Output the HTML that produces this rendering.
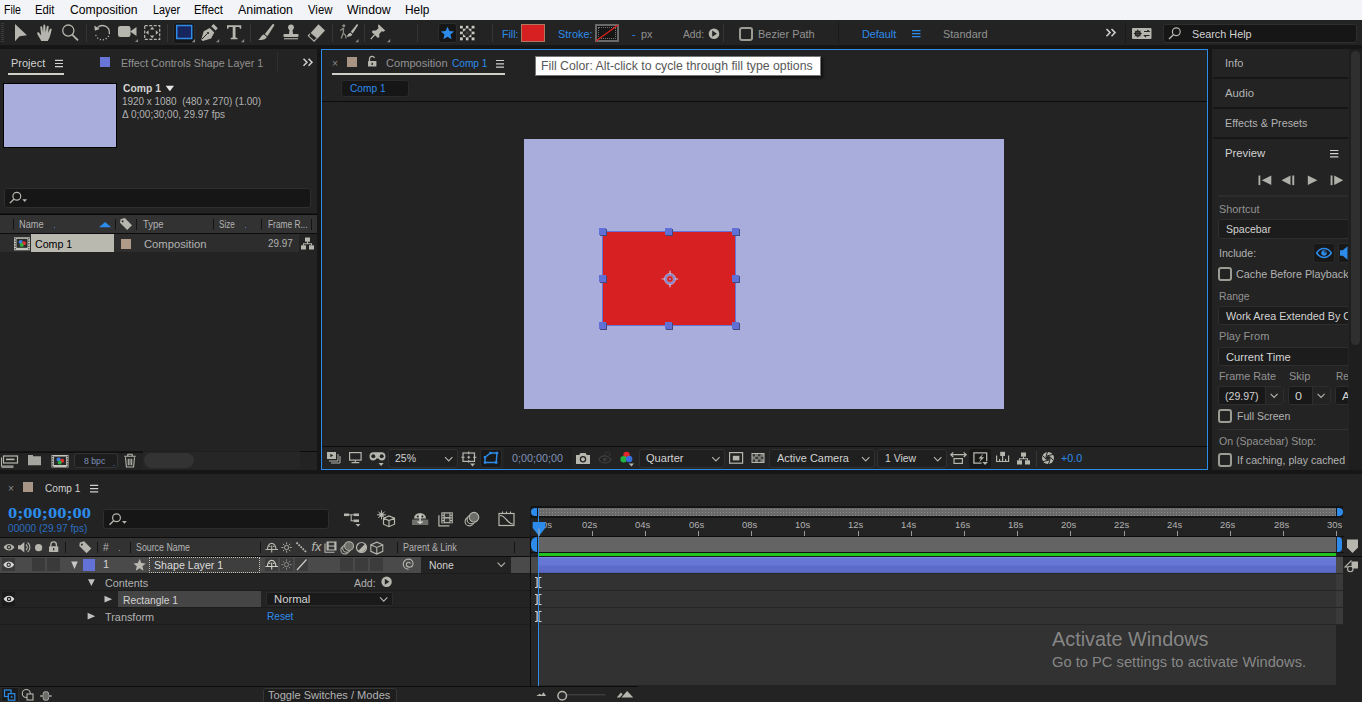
<!DOCTYPE html>
<html lang="en"><head><meta charset="utf-8"><title>After Effects - Comp 1</title>
<style>
html,body{margin:0;padding:0;}
body{width:1362px;height:702px;overflow:hidden;background:#161616;font-family:"Liberation Sans", sans-serif;position:relative;}
.b{position:absolute;box-sizing:border-box;}
.i{position:absolute;overflow:visible;}
.t{position:absolute;white-space:pre;transform-origin:0 50%;}
</style></head>
<body>
<nav aria-label="Menu bar">
<div class="b" style="left:0px;top:0px;width:1362px;height:20px;background:#f3f4f8;"></div>
<span class="t" style="left:4px;top:3px;font-size:12.5px;line-height:14px;color:#000;transform:scaleX(0.8434);">File</span>
<span class="t" style="left:35.3px;top:3px;font-size:12.5px;line-height:14px;color:#000;transform:scaleX(0.9004);">Edit</span>
<span class="t" style="left:69.7px;top:3px;font-size:12.5px;line-height:14px;color:#000;transform:scaleX(0.9729);">Composition</span>
<span class="t" style="left:152.7px;top:3px;font-size:12.5px;line-height:14px;color:#000;transform:scaleX(0.8631);">Layer</span>
<span class="t" style="left:194.3px;top:3px;font-size:12.5px;line-height:14px;color:#000;transform:scaleX(0.9138);">Effect</span>
<span class="t" style="left:238.3px;top:3px;font-size:12.5px;line-height:14px;color:#000;transform:scaleX(0.9893);">Animation</span>
<span class="t" style="left:308.3px;top:3px;font-size:12.5px;line-height:14px;color:#000;transform:scaleX(0.9079);">View</span>
<span class="t" style="left:347.3px;top:3px;font-size:12.5px;line-height:14px;color:#000;transform:scaleX(0.9827);">Window</span>
<span class="t" style="left:405.3px;top:3px;font-size:12.5px;line-height:14px;color:#000;transform:scaleX(0.9487);">Help</span>
</nav>
<header aria-label="Tools">
<div class="b" style="left:0px;top:20px;width:1362px;height:25px;background:#232323;"></div>
<div class="b" style="left:1px;top:23px;width:3px;height:19px;background:repeating-linear-gradient(to bottom,#3c3c3c 0 1px,transparent 1px 2px);"></div>
<div class="b" style="left:86px;top:24px;width:1px;height:18px;background:#353535;"></div>
<div class="b" style="left:167px;top:24px;width:1px;height:18px;background:#353535;"></div>
<div class="b" style="left:250px;top:24px;width:1px;height:18px;background:#353535;"></div>
<div class="b" style="left:332px;top:24px;width:1px;height:18px;background:#353535;"></div>
<div class="b" style="left:364px;top:24px;width:1px;height:18px;background:#353535;"></div>
<div class="b" style="left:417px;top:24px;width:1px;height:18px;background:#353535;"></div>
<div class="b" style="left:492px;top:24px;width:1px;height:18px;background:#353535;"></div>
<div class="b" style="left:723px;top:24px;width:1px;height:18px;background:#353535;"></div>
<div class="b" style="left:838px;top:22px;width:1px;height:22px;background:#1a1a1a;"></div>
<div class="b" style="left:1125px;top:22px;width:1px;height:22px;background:#1a1a1a;"></div>
<div class="b" style="left:173px;top:22px;width:22px;height:22px;background:#161616;border-radius:3px;border:1px solid #2c2c2c;"></div>
<div class="b" style="left:438px;top:23px;width:19px;height:20px;background:#161616;border-radius:3px;border:1px solid #2c2c2c;"></div>
<span class="t" style="left:501.5px;top:28px;font-size:11px;line-height:12px;color:#2d8ceb;transform:scaleX(0.9644);">Fill:</span>
<div class="b" style="left:521px;top:24px;width:24px;height:18px;background:#d62022;border:1px solid #b07860;"></div>
<span class="t" style="left:557.5px;top:28px;font-size:11px;line-height:12px;color:#2d8ceb;transform:scaleX(0.9897);">Stroke:</span>
<div class="b" style="left:595px;top:24px;width:24px;height:18px;background:#161616;border:2px solid #6a6a68;outline:1px dotted #747472;outline-offset:-4px;"></div>
<svg class="i" style="left:595px;top:24px;" width="24" height="18" viewBox="0 0 24 18"><line x1="1" y1="17" x2="23" y2="1" stroke="#e0201c" stroke-width="1.2"/></svg>
<span class="t" style="left:632px;top:28px;font-size:11px;line-height:12px;color:#2d8ceb;transform:scaleX(0.9532);">-</span>
<span class="t" style="left:641px;top:28px;font-size:11px;line-height:12px;color:#929292;transform:scaleX(0.9892);">px</span>
<span class="t" style="left:682.5px;top:28px;font-size:11px;line-height:12px;color:#929292;transform:scaleX(0.9364);">Add:</span>
<div class="b" style="left:739px;top:27px;width:14px;height:14px;border:2px solid #9c9c94;border-radius:3px;"></div>
<span class="t" style="left:757.5px;top:28px;font-size:11px;line-height:12px;color:#929292;transform:scaleX(0.9969);">Bezier Path</span>
<span class="t" style="left:862px;top:28px;font-size:11px;line-height:12px;color:#2d8ceb;transform:scaleX(0.9811);">Default</span>
<span class="t" style="left:943px;top:28px;font-size:11px;line-height:12px;color:#929292;transform:scaleX(0.9965);">Standard</span>
<div class="b" style="left:1163px;top:24px;width:194px;height:19px;background:#161616;border:1px solid #2e2e2e;border-radius:3px;"></div>
<span class="t" style="left:1191.8px;top:28px;font-size:11px;line-height:12px;color:#d2d2d2;transform:scaleX(0.9844);">Search Help</span>
<svg class="i" style="left:0;top:20px" width="1362" height="25" viewBox="0 20 1362 25"><path d="M15 24L27 35.3L19.6 36.2L15 41.2Z" fill="#b6b6ae"/><path d="M41.2 41c-1.2-2.6-3-4.6-4-7.2c-.4-1.2 1-2 1.9-1l2.1 2.6l-.9-8.2c0-1.3 1.7-1.4 1.9-.1l.9 5.4l.2-7c.1-1.3 1.9-1.3 2 0l.3 7l1.2-6c.3-1.2 1.9-1 1.9.3l-.7 6.3l1.9-4c.5-1.1 2-.6 1.7.6c-.6 3.4-1.6 7.500-3.800 11.300z" fill="#b6b6ae"/><circle cx="68.3" cy="30.6" r="5.6" fill="none" stroke="#b6b6ae" stroke-width="1.3"/><path d="M72.4 34.8L78 40.4" stroke="#b6b6ae" stroke-width="1.8"/><path d="M97.5 27.6A7 7 0 0 1 109.4 33" fill="none" stroke="#b6b6ae" stroke-width="1.3"/><path d="M109.4 33A7 7 0 0 1 95.5 34" fill="none" stroke="#b6b6ae" stroke-width="1.3" stroke-dasharray="1.2 1.8"/><path d="M94.3 25.4l.6 5.3l4.8-1.7z" fill="#b6b6ae"/><rect x="118" y="26" width="12.5" height="11" rx="2.2" fill="#b6b6ae"/><path d="M130 31.5l6.5-4.500v9z" fill="#b6b6ae"/><path d="M138 39v3h-3z" fill="#8a8a84"/><rect x="144.700" y="25.700" width="15" height="13.600" fill="none" stroke="#b6b6ae" stroke-width="1.2" stroke-dasharray="3 1.500"/><path d="M152.200 26.800l2.200 2.600h-4.400zM152.200 38.200l2.200-2.600h-4.400zM145.900 32.500l2.700-2.200v4.400zM158.500 32.500l-2.700-2.200v4.400z" fill="#b6b6ae"/><rect x="176.700" y="25.500" width="15" height="13" fill="#17275e" stroke="#2d8ceb" stroke-width="1.5"/><path d="M195 39v3.200h-3.200z" fill="#8a8a84"/><path d="M201.300 39.600l2.400-8.400l6-3.200l4.600 4.600l-3.200 6l-8.400 2.400zM211.200 26.200l2.400-2.200l4.200 4.200l-2.200 2.400z" fill="#b6b6ae"/><path d="M202 39l5.200-5.200" stroke="#232323" stroke-width="1"/><circle cx="208" cy="33" r="1.100" fill="#232323"/><path d="M219.200 39v3.200h-3.200z" fill="#8a8a84"/><path d="M227 25.200h14.200v3.600h-1.300l-.5-1.800h-3.900v10.600l2 .4v1.200h-6.800v-1.200l2-.4v-10.600h-3.900l-.5 1.800h-1.300z" fill="#b6b6ae"/><path d="M244.200 39v3.200h-3.200z" fill="#8a8a84"/><path d="M272.500 24.200c1.200-.6 2.200.4 1.600 1.500l-6.700 10.500l-2.600-2.300z" fill="#b6b6ae"/><path d="M264 34.600l2.800 2.500c-.8 2.300-4.700 3.500-8.600 2.700c2.400-.8 2.600-4.600 5.800-5.200z" fill="#b6b6ae"/><circle cx="291" cy="27.300" r="2.900" fill="#b6b6ae"/><path d="M289.600 29h2.800l.6 5h-4z" fill="#b6b6ae"/><rect x="283.500" y="34" width="15" height="3" rx=".8" fill="#b6b6ae"/><rect x="284" y="38.200" width="14" height="1.100" fill="#b6b6ae"/><path d="M318.500 24.300l6.500 6.100l-7.600 8.400l-6.800-5.900z" fill="#b6b6ae"/><path d="M310 33.800l-1.700 2l5.800 5.400l2.600-2.800" fill="none" stroke="#b6b6ae" stroke-width="1.100"/><circle cx="343.800" cy="25.800" r="1.500" fill="#8a8a84"/><path d="M343.600 28l-3.400 2.600M343.600 28l-.4 5l-2 5.400M343.200 33l2.400 2.500l.4 3" stroke="#8a8a84" stroke-width="1.300" fill="none"/><path d="M356.800 24.300c.9-.4 1.500.3 1.100 1.100l-5.200 8.100l-1.900-1.700z" fill="#b6b6ae"/><path d="M350.300 32.700l2 1.800c-.6 1.700-3.400 2.500-6.200 2c1.700-.6 1.900-3.400 4.200-3.800z" fill="#b6b6ae"/><path d="M358.500 39v3.200h-3.200z" fill="#8a8a84"/><path d="M378.600 24.200l6.600 6.300l-1.800 1.300l-1.700-.6l-2.500 2.700l.2 3l-1.500 1.200l-6.200-6.200l1.300-1.500l3 .2l2.600-2.600l-.7-1.700z" fill="#b6b6ae"/><path d="M374.600 34.800l-3.800 4.300" stroke="#b6b6ae" stroke-width="1.300"/><path d="M390.200 39v3.200h-3.200z" fill="#8a8a84"/><path d="M447.500 26.800l1.900 4.300l4.700.4l-3.600 3.100l1.100 4.600l-4.100-2.500l-4.100 2.500l1.100-4.600l-3.600-3.100l4.700-.4z" fill="#2d8ceb"/><rect x="460.0" y="25.8" width="2.900" height="2.900" fill="#c8c8c0"/><rect x="462.9" y="25.8" width="2.900" height="2.900" fill="#1a1a1a"/><rect x="465.8" y="25.8" width="2.900" height="2.900" fill="#c8c8c0"/><rect x="468.7" y="25.8" width="2.900" height="2.900" fill="#1a1a1a"/><rect x="471.6" y="25.8" width="2.900" height="2.900" fill="#c8c8c0"/><rect x="460.0" y="28.7" width="2.900" height="2.900" fill="#1a1a1a"/><rect x="462.9" y="28.7" width="2.900" height="2.900" fill="#c8c8c0"/><rect x="465.8" y="28.7" width="2.900" height="2.900" fill="#1a1a1a"/><rect x="468.7" y="28.7" width="2.900" height="2.900" fill="#c8c8c0"/><rect x="471.6" y="28.7" width="2.900" height="2.900" fill="#1a1a1a"/><rect x="460.0" y="31.6" width="2.900" height="2.900" fill="#c8c8c0"/><rect x="462.9" y="31.6" width="2.900" height="2.900" fill="#1a1a1a"/><rect x="465.8" y="31.6" width="2.900" height="2.900" fill="#c8c8c0"/><rect x="468.7" y="31.6" width="2.900" height="2.900" fill="#1a1a1a"/><rect x="471.6" y="31.6" width="2.900" height="2.900" fill="#c8c8c0"/><rect x="460.0" y="34.5" width="2.900" height="2.900" fill="#1a1a1a"/><rect x="462.9" y="34.5" width="2.900" height="2.900" fill="#c8c8c0"/><rect x="465.8" y="34.5" width="2.900" height="2.900" fill="#1a1a1a"/><rect x="468.7" y="34.5" width="2.900" height="2.900" fill="#c8c8c0"/><rect x="471.6" y="34.5" width="2.900" height="2.900" fill="#1a1a1a"/><rect x="460.0" y="37.4" width="2.900" height="2.900" fill="#c8c8c0"/><rect x="462.9" y="37.4" width="2.900" height="2.900" fill="#1a1a1a"/><rect x="465.8" y="37.4" width="2.900" height="2.900" fill="#c8c8c0"/><rect x="468.7" y="37.4" width="2.900" height="2.900" fill="#1a1a1a"/><rect x="471.6" y="37.4" width="2.900" height="2.900" fill="#c8c8c0"/><circle cx="467.200" cy="33" r="3.600" fill="#2a2a2a" opacity=".85"/><circle cx="714" cy="33.700" r="5.300" fill="#b6b6ae"/><path d="M712.200 30.600v6.200l4.700-3.100z" fill="#232323"/><path d="M912 30.700h8.500M912 33.700h8.500M912 36.700h8.500" stroke="#2d8ceb" stroke-width="1.200"/><path d="M1106.500 29l3.600 3.600l-3.600 3.600M1111.500 29l3.600 3.600l-3.600 3.600" fill="none" stroke="#d0d0d0" stroke-width="1.500"/><rect x="1132" y="28" width="19.500" height="11" rx="1" fill="#b6b6ae"/><circle cx="1137.800" cy="33.500" r="2.400" fill="none" stroke="#232323" stroke-width="1.400"/><path d="M1137.800 29.500v8M1133.800 33.500h8M1135 30.700l5.600 5.600M1140.600 30.700l-5.600 5.600" stroke="#232323" stroke-width=".9"/><path d="M1144 31.500h5l-1.500-1.500M1149.500 35.500h-5l1.500 1.500" stroke="#232323" stroke-width="1.100" fill="none"/><circle cx="1176.300" cy="31.800" r="3.900" fill="none" stroke="#b6b6ae" stroke-width="1.200"/><path d="M1173.400 34.700l-4.400 4.400" stroke="#b6b6ae" stroke-width="1.400"/></svg>
</header>
<section aria-label="Project panel">
<div class="b" style="left:0px;top:49px;width:317px;height:421px;background:#232323;"></div>
<span class="t" style="left:10.5px;top:57px;font-size:11px;line-height:12px;color:#d2d2d2;transform:scaleX(0.9985);">Project</span>
<div class="b" style="left:8px;top:73px;width:56px;height:2px;background:#cfcfc8;"></div>
<div class="b" style="left:100px;top:57px;width:10px;height:10px;background:#6a75d8;"></div>
<span class="t" style="left:121.3px;top:57px;font-size:11px;line-height:12px;color:#929292;transform:scaleX(0.9702);">Effect Controls Shape Layer 1</span>
<div class="b" style="left:277px;top:52px;width:1px;height:21px;background:#2e2e2e;"></div>
<div class="b" style="left:3px;top:83px;width:114px;height:65px;background:#a9addc;border:1px solid #000;"></div>
<span class="t" style="left:123px;top:82px;font-size:11px;line-height:12px;color:#d2d2d2;font-weight:700;transform:scaleX(0.9419);">Comp 1</span>
<span class="t" style="left:122px;top:95px;font-size:10.5px;line-height:12px;color:#b2b2b2;transform:scaleX(0.9449);">1920 x 1080  (480 x 270) (1.00)</span>
<span class="t" style="left:122px;top:108px;font-size:10.5px;line-height:12px;color:#b2b2b2;transform:scaleX(0.9536);">Δ 0;00;30;00, 29.97 fps</span>
<div class="b" style="left:4px;top:188px;width:307px;height:20px;background:#161616;border:1px solid #2e2e2e;border-radius:3px;"></div>
<div class="b" style="left:0px;top:213px;width:317px;height:1px;background:#181818;"></div>
<div class="b" style="left:0px;top:214px;width:317px;height:1px;background:#080808;"></div>
<div class="b" style="left:0px;top:215px;width:317px;height:18px;background:#323232;"></div>
<div class="b" style="left:0px;top:233px;width:317px;height:1px;background:#0c0c0c;"></div>
<div class="b" style="left:13px;top:219px;width:1px;height:11px;background:#141414;"></div>
<div class="b" style="left:115px;top:219px;width:1px;height:11px;background:#141414;"></div>
<div class="b" style="left:136px;top:219px;width:1px;height:11px;background:#141414;"></div>
<div class="b" style="left:213px;top:219px;width:1px;height:11px;background:#141414;"></div>
<div class="b" style="left:261px;top:219px;width:1px;height:11px;background:#141414;"></div>
<div class="b" style="left:311px;top:219px;width:1px;height:11px;background:#141414;"></div>
<span class="t" style="left:19px;top:219px;font-size:10px;line-height:11px;color:#b2b2b2;transform:scaleX(0.9255);">Name</span>
<span class="t" style="left:142.5px;top:219px;font-size:10px;line-height:11px;color:#b2b2b2;transform:scaleX(0.9452);">Type</span>
<span class="t" style="left:219px;top:219px;font-size:10px;line-height:11px;color:#b2b2b2;transform:scaleX(0.8071);">Size</span>
<span class="t" style="left:267.5px;top:219px;font-size:10px;line-height:11px;color:#b2b2b2;transform:scaleX(0.8363);">Frame R...</span>
<div class="b" style="left:54px;top:227px;width:1px;height:1px;background:#4e78c8;"></div>
<div class="b" style="left:157px;top:227px;width:1px;height:1px;background:#4e78c8;"></div>
<div class="b" style="left:245px;top:227px;width:1px;height:1px;background:#4e78c8;"></div>
<div class="b" style="left:0px;top:234px;width:299px;height:18px;background:#2d2d2d;"></div>
<div class="b" style="left:31px;top:234px;width:83px;height:18px;background:#bab9b0;"></div>
<span class="t" style="left:34.7px;top:238px;font-size:11px;line-height:12px;color:#000;transform:scaleX(0.9680);">Comp 1</span>
<div class="b" style="left:121px;top:239px;width:10px;height:10px;background:#b09a88;"></div>
<span class="t" style="left:143.5px;top:238px;font-size:11px;line-height:12px;color:#b2b2b2;transform:scaleX(1.0222);">Composition</span>
<span class="t" style="left:268px;top:237px;font-size:11px;line-height:12px;color:#b2b2b2;transform:scaleX(0.8972);">29.97</span>
<div class="b" style="left:0px;top:451px;width:143px;height:1px;background:#141414;"></div>
<div class="b" style="left:0px;top:452px;width:143px;height:1px;background:#101010;"></div>
<div class="b" style="left:143px;top:451px;width:157px;height:1px;background:#1f1f1f;"></div>
<div class="b" style="left:300px;top:451px;width:17px;height:1px;background:#0c0c0c;"></div>
<div class="b" style="left:143px;top:452px;width:157px;height:17px;background:#262626;"></div>
<div class="b" style="left:74px;top:453px;width:44px;height:15px;background:#1d1d1d;border:1px solid #343434;border-radius:3px;"></div>
<span class="t" style="left:83.7px;top:455px;font-size:9.5px;line-height:11px;color:#7f93b8;transform:scaleX(0.9161);">8 bpc</span>
<div class="b" style="left:144px;top:453px;width:50px;height:15px;background:#333;border-radius:8px;"></div>
</section>
<main aria-label="Composition panel">
<div class="b" style="left:321px;top:49px;width:887px;height:421px;background:#232323;border:1px solid #2d8ceb;"></div>
<span class="t" style="left:331.5px;top:57px;font-size:11px;line-height:12px;color:#8a8a8a;transform:scaleX(0.9320);">×</span>
<div class="b" style="left:347px;top:57px;width:10px;height:10px;background:#a89484;"></div>
<span class="t" style="left:386.4px;top:57px;font-size:11px;line-height:12px;color:#929292;transform:scaleX(1.0075);">Composition</span>
<span class="t" style="left:452px;top:57px;font-size:11px;line-height:12px;color:#2d8ceb;transform:scaleX(0.9187);">Comp 1</span>
<div class="b" style="left:332px;top:73px;width:173px;height:2px;background:#cfcfc8;"></div>
<div class="b" style="left:341px;top:80px;width:68px;height:17px;background:#161616;border:1px solid #2a2a2a;border-radius:3px;"></div>
<span class="t" style="left:350px;top:82px;font-size:11px;line-height:12px;color:#2d8ceb;transform:scaleX(0.9239);">Comp 1</span>
<div class="b" style="left:322px;top:101px;width:885px;height:1px;background:#0c0c0c;"></div>
<div class="b" style="left:535px;top:56px;width:286px;height:20px;background:#fff;border:1px solid #767676;box-shadow:2px 2px 2px rgba(0,0,0,.55);"></div>
<span class="t" style="left:541.4px;top:59px;font-size:12px;line-height:14px;color:#575757;transform:scaleX(1.0232);">Fill Color: Alt-click to cycle through fill type options</span>
<div class="b" style="left:524px;top:139px;width:480px;height:270px;background:#a9addc;"></div>
<div class="b" style="left:602px;top:231px;width:134px;height:95px;background:#d62022;border:1px solid #6672d4;"></div>
<div class="b" style="left:599.0px;top:228.0px;width:7px;height:7px;background:#6070d6;box-shadow:1px 1px 0 #444a78;"></div>
<div class="b" style="left:665.0px;top:228.0px;width:7px;height:7px;background:#6070d6;box-shadow:1px 1px 0 #444a78;"></div>
<div class="b" style="left:732.0px;top:228.0px;width:7px;height:7px;background:#6070d6;box-shadow:1px 1px 0 #444a78;"></div>
<div class="b" style="left:599.0px;top:275.0px;width:7px;height:7px;background:#6070d6;box-shadow:1px 1px 0 #444a78;"></div>
<div class="b" style="left:732.0px;top:275.0px;width:7px;height:7px;background:#6070d6;box-shadow:1px 1px 0 #444a78;"></div>
<div class="b" style="left:599.0px;top:322.0px;width:7px;height:7px;background:#6070d6;box-shadow:1px 1px 0 #444a78;"></div>
<div class="b" style="left:665.0px;top:322.0px;width:7px;height:7px;background:#6070d6;box-shadow:1px 1px 0 #444a78;"></div>
<div class="b" style="left:732.0px;top:322.0px;width:7px;height:7px;background:#6070d6;box-shadow:1px 1px 0 #444a78;"></div>
<div class="b" style="left:322px;top:446px;width:885px;height:1px;background:#0c0c0c;"></div>
<div class="b" style="left:388px;top:449px;width:70px;height:19px;background:#1f1f1f;border:1px solid #303030;border-radius:3px;"></div>
<span class="t" style="left:395px;top:452px;font-size:11px;line-height:12px;color:#d2d2d2;transform:scaleX(0.9532);">25%</span>
<div class="b" style="left:480px;top:449px;width:22px;height:19px;background:#181818;border:1px solid #2c2c2c;border-radius:3px;"></div>
<div class="b" style="left:504px;top:448px;width:68px;height:21px;background:#1f1f1f;"></div>
<span class="t" style="left:511.5px;top:452px;font-size:11px;line-height:12px;color:#7f93b8;transform:scaleX(0.9788);">0;00;00;00</span>
<div class="b" style="left:639px;top:449px;width:86px;height:19px;background:#1f1f1f;border:1px solid #303030;border-radius:3px;"></div>
<span class="t" style="left:646px;top:452px;font-size:11px;line-height:12px;color:#d2d2d2;transform:scaleX(1.0054);">Quarter</span>
<div class="b" style="left:769px;top:449px;width:106px;height:19px;background:#1f1f1f;border:1px solid #303030;border-radius:3px;"></div>
<span class="t" style="left:777.4px;top:452px;font-size:11px;line-height:12px;color:#d2d2d2;transform:scaleX(0.9967);">Active Camera</span>
<div class="b" style="left:877px;top:449px;width:70px;height:19px;background:#1f1f1f;border:1px solid #303030;border-radius:3px;"></div>
<span class="t" style="left:884.9px;top:452px;font-size:11px;line-height:12px;color:#d2d2d2;transform:scaleX(0.9474);">1 View</span>
<div class="b" style="left:969px;top:449px;width:22px;height:19px;background:#181818;border-radius:3px;"></div>
<div class="b" style="left:1036px;top:451px;width:1px;height:16px;background:#353535;"></div>
<span class="t" style="left:1060.9px;top:452px;font-size:11px;line-height:12px;color:#2d8ceb;transform:scaleX(0.9715);">+0.0</span>
<svg class="i" style="left:0;top:49px" width="1212" height="421" viewBox="0 49 1212 421"><path d="M55 60.3h8M55 63.5h8M55 66.7h8" stroke="#d0d0d0" stroke-width="1.200"/><path d="M303.500 58.800l3.500 3.500l-3.500 3.500M308.500 58.800l3.500 3.500l-3.500 3.500" fill="none" stroke="#d0d0d0" stroke-width="1.500"/><path d="M165.700 85.800h8.300l-4.150 5.400z" fill="#e8e8e8"/><circle cx="16.8" cy="196.2" r="3.9" fill="none" stroke="#b6b6ae" stroke-width="1.200"/><path d="M14.07 198.92999999999998l-4.200 4.200" stroke="#b6b6ae" stroke-width="1.400"/><path d="M22.300 199.300h4.800l-2.400 2.700z" fill="#b6b6ae"/><path d="M99 227.300h12.200l-6.100-5.300z" fill="#2d8ceb"/><path transform="translate(120 218) scale(1.0)" d="M0.500 1.200L4.800 0l7.200 7.200l-4.800 4.800l-7.200-7.200zM2.600 2.200a1 1 0 1 0 .01 0z" fill="#b6b6ae" fill-rule="evenodd"/><rect x="14" y="237.3" width="16" height="13" fill="#c4c4bc"/><rect x="16.5" y="238.8" width="11" height="9" fill="#2a2a2a"/><rect x="14.6" y="238.10000000000002" width="1.200" height="1.300" fill="#333"/><rect x="28.2" y="238.10000000000002" width="1.200" height="1.300" fill="#333"/><rect x="14.6" y="240.60000000000002" width="1.200" height="1.300" fill="#333"/><rect x="28.2" y="240.60000000000002" width="1.200" height="1.300" fill="#333"/><rect x="14.6" y="243.10000000000002" width="1.200" height="1.300" fill="#333"/><rect x="28.2" y="243.10000000000002" width="1.200" height="1.300" fill="#333"/><rect x="14.6" y="245.60000000000002" width="1.200" height="1.300" fill="#333"/><rect x="28.2" y="245.60000000000002" width="1.200" height="1.300" fill="#333"/><rect x="14.6" y="248.10000000000002" width="1.200" height="1.300" fill="#333"/><rect x="28.2" y="248.10000000000002" width="1.200" height="1.300" fill="#333"/><circle cx="20.72" cy="241.98000000000002" r="2.100" fill="#3a7ee0"/><circle cx="23.92" cy="243.28" r="2.100" fill="#e03030"/><circle cx="21.68" cy="245.10000000000002" r="2" fill="#30b040"/><rect x="305" y="237.5" width="5" height="4.200" fill="#b6b6ae"/><rect x="301" y="245.3" width="5" height="4.200" fill="#b6b6ae"/><rect x="309" y="245.3" width="5" height="4.200" fill="#b6b6ae"/><path d="M307.5 241.5v2.400M303.5 245.5v-1.800h8v1.800" fill="none" stroke="#b6b6ae" stroke-width="1.100"/><rect x="3.500" y="456" width="14" height="7" fill="none" stroke="#b6b6ae" stroke-width="1.200"/><rect x="6" y="458.600" width="8.500" height="1.600" fill="#b6b6ae"/><path d="M1.500 457.500v8.500h12M1.500 467.300h12" stroke="#b6b6ae" stroke-width="1.100" fill="none"/><path d="M28 455h5v1.200h8v9h-13z" fill="#a6a6a0"/><rect x="51.5" y="455" width="17" height="12.5" fill="#c4c4bc"/><rect x="54.0" y="456.5" width="12" height="8.5" fill="#2a2a2a"/><rect x="52.1" y="455.8" width="1.200" height="1.300" fill="#333"/><rect x="66.7" y="455.8" width="1.200" height="1.300" fill="#333"/><rect x="52.1" y="458.3" width="1.200" height="1.300" fill="#333"/><rect x="66.7" y="458.3" width="1.200" height="1.300" fill="#333"/><rect x="52.1" y="460.8" width="1.200" height="1.300" fill="#333"/><rect x="66.7" y="460.8" width="1.200" height="1.300" fill="#333"/><rect x="52.1" y="463.3" width="1.200" height="1.300" fill="#333"/><rect x="66.7" y="463.3" width="1.200" height="1.300" fill="#333"/><rect x="52.1" y="465.8" width="1.200" height="1.300" fill="#333"/><rect x="66.7" y="465.8" width="1.200" height="1.300" fill="#333"/><circle cx="58.64" cy="459.5" r="2.100" fill="#3a7ee0"/><circle cx="62.04" cy="460.75" r="2.100" fill="#e03030"/><circle cx="59.66" cy="462.5" r="2" fill="#30b040"/><path d="M125.500 457.300l.9 9.700h7.200l.9-9.700M124.200 456.300h11.600M127.800 456v-1.700h4.400v1.700M128.300 458.800v6.500M130 458.800v6.500M131.700 458.800v6.500" fill="none" stroke="#b6b6ae" stroke-width="1.100"/><rect x="113.500" y="465" width="1" height="1" fill="#4e78c8"/><path d="M369.500 61.500v-2.500a2.600 2.600 0 0 1 5-1" fill="none" stroke="#b6b6ae" stroke-width="1.300"/><rect x="368" y="61" width="8.400" height="5.600" rx=".6" fill="#b6b6ae"/><rect x="371.500" y="62.800" width="1.400" height="2.200" fill="#232323"/><path d="M496 60.5h8M496 63.8h8M496 67.1h8" stroke="#d0d0d0" stroke-width="1.200"/><rect x="327" y="452" width="9" height="7" fill="#b6b6ae"/><path d="M330.300 453.700v3.600l3-1.800z" fill="#232323"/><path d="M338 454v7h-9M340 456v7h-9" fill="none" stroke="#b6b6ae" stroke-width="1"/><rect x="349.600" y="452.600" width="11.500" height="7.500" fill="none" stroke="#b6b6ae" stroke-width="1.200"/><path d="M355.300 460v2M351.500 462.600h7.800" stroke="#b6b6ae" stroke-width="1.200"/><path d="M369.500 456.500c0-2.800 1.500-4.200 4-4.200h8c2.500 0 4 1.400 4 4.200c0 2.700-1.400 4-3.600 4c-1.700 0-2.700-.9-3.300-2h-2.200c-.6 1.100-1.600 2-3.300 2c-2.200 0-3.600-1.300-3.600-4z" fill="#b6b6ae"/><circle cx="373.300" cy="456.300" r="2" fill="#232323"/><circle cx="381.700" cy="456.300" r="2" fill="#232323"/><path d="M378.500 463h5.200l-2.600 3z" fill="#b6b6ae"/><path d="M445 457.2l3.7 3.8l3.7 -3.8" fill="none" stroke="#b4b4ac" stroke-width="1.100"/><rect x="463" y="453" width="11.500" height="8.400" fill="none" stroke="#b6b6ae" stroke-width="1.200"/><path d="M461.300 457.200h3.400M473 457.200h3.400M468.700 451.500v2.800M468.700 460v2.800M467.200 457.200h3M468.700 455.700v3" stroke="#b6b6ae" stroke-width="1.100"/><path d="M470 463.500h5.200l-2.600 3z" fill="#b6b6ae"/><path d="M485 462.500v-5.200l5.500-4.300h6.500l-.8 9.500z" fill="none" stroke="#2d8ceb" stroke-width="1.400"/><g fill="#2d8ceb"><rect x="483.800" y="461.300" width="2.400" height="2.400"/><rect x="483.800" y="456.100" width="2.400" height="2.400"/><rect x="489.300" y="451.800" width="2.400" height="2.400"/><rect x="495.800" y="451.800" width="2.400" height="2.400"/><rect x="495" y="461.300" width="2.400" height="2.400"/></g><path d="M576 455h3.200l1.300-2h5l1.300 2h3.200v9h-14z" fill="#b6b6ae"/><circle cx="583" cy="459.300" r="2.600" fill="none" stroke="#232323" stroke-width="1.300"/><path d="M598.500 459.500c2-3 5.500-4.500 9-2.800c1.600.8 2.800 2 3.600 2.800c-2 3-6 4.300-9.200 2.800c-1.400-.7-2.600-1.800-3.400-2.800z" fill="none" stroke="#3e3e3e" stroke-width="1.200"/><circle cx="604.800" cy="459.500" r="1.800" fill="#3e3e3e"/><circle cx="607.500" cy="454" r="2.400" fill="none" stroke="#3a3a3a" stroke-width="1.200" stroke-dasharray="1.500 1"/><circle cx="626.500" cy="455" r="3.200" fill="#e02828"/><circle cx="623.600" cy="459.200" r="3.200" fill="#22b43c"/><circle cx="629.200" cy="459" r="3.200" fill="#3a6ee0"/><path d="M628.800 463.500h5.200l-2.600 3z" fill="#b6b6ae"/><path d="M712.2 457.2l3.7 3.8l3.7 -3.8" fill="none" stroke="#b4b4ac" stroke-width="1.100"/><rect x="729.600" y="452.600" width="13" height="10.600" fill="none" stroke="#b6b6ae" stroke-width="1.200"/><rect x="732.800" y="455.800" width="6.600" height="4.600" fill="#b6b6ae"/><rect x="751.500" y="453" width="13" height="10" fill="#b8b8b0"/><rect x="752.50" y="454.00" width="2.750" height="2.670" fill="#3a3a3a"/><rect x="755.25" y="454.00" width="2.750" height="2.670" fill="#7a7a78"/><rect x="758.00" y="454.00" width="2.750" height="2.670" fill="#3a3a3a"/><rect x="760.75" y="454.00" width="2.750" height="2.670" fill="#7a7a78"/><rect x="752.50" y="456.67" width="2.750" height="2.670" fill="#7a7a78"/><rect x="755.25" y="456.67" width="2.750" height="2.670" fill="#3a3a3a"/><rect x="758.00" y="456.67" width="2.750" height="2.670" fill="#7a7a78"/><rect x="760.75" y="456.67" width="2.750" height="2.670" fill="#3a3a3a"/><rect x="752.50" y="459.34" width="2.750" height="2.670" fill="#3a3a3a"/><rect x="755.25" y="459.34" width="2.750" height="2.670" fill="#7a7a78"/><rect x="758.00" y="459.34" width="2.750" height="2.670" fill="#3a3a3a"/><rect x="760.75" y="459.34" width="2.750" height="2.670" fill="#7a7a78"/><path d="M862 457.2l3.7 3.8l3.7 -3.8" fill="none" stroke="#b4b4ac" stroke-width="1.100"/><path d="M934 457.2l3.7 3.8l3.7 -3.8" fill="none" stroke="#b4b4ac" stroke-width="1.100"/><path d="M951 454.700h15M953.300 452.400l-2.500 2.300l2.500 2.300M963.700 452.400l2.500 2.300l-2.500 2.300" stroke="#b6b6ae" stroke-width="1.200" fill="none"/><rect x="954" y="458.600" width="8.400" height="4.800" fill="none" stroke="#b6b6ae" stroke-width="1.200"/><path d="M981.500 463.200h-7.600v-10.400h12.800v8.400" fill="none" stroke="#b6b6ae" stroke-width="1.300"/><path d="M983 454l-4.600 4.600h2.600l-1.800 3.600l5-5h-2.800l1.800-3.200z" fill="#b6b6ae"/><path d="M982.300 462h5.600l-2.800 3z" fill="#b6b6ae"/><path d="M996.600 455.500v6h12v-6M1002.600 456v5.500M999.600 461.500v-2.500M1005.600 461.500v-2.500" fill="none" stroke="#b6b6ae" stroke-width="1.200"/><rect x="1000.200" y="451.800" width="4.800" height="4.200" fill="#b6b6ae"/><rect x="1021" y="452.5" width="5" height="4.200" fill="#b6b6ae"/><rect x="1017" y="460.3" width="5" height="4.200" fill="#b6b6ae"/><rect x="1025" y="460.3" width="5" height="4.200" fill="#b6b6ae"/><path d="M1023.5 456.5v2.400M1019.5 460.5v-1.800h8v1.800" fill="none" stroke="#b6b6ae" stroke-width="1.100"/><circle cx="1048" cy="458" r="6" fill="#b6b6ae"/><circle cx="1048" cy="458" r="2.100" fill="#232323"/><path d="M1050.3 458.4L1048.5 464.2M1048.8 460.2L1042.9 461.6M1046.5 459.8L1042.4 455.4M1045.7 457.6L1047.5 451.8M1047.2 455.8L1053.1 454.4M1049.5 456.2L1053.6 460.6" stroke="#232323" stroke-width="1"/></svg>
<svg class="i" style="left:660.5px;top:269.5px" width="18" height="18" viewBox="0 0 18 18"><circle cx="9" cy="9" r="4.500" fill="none" stroke="#7a86d8" stroke-width="2.200"/><circle cx="9" cy="9" r="5.600" fill="none" stroke="#c8c8d8" stroke-width=".6"/><circle cx="9" cy="9" r="3.300" fill="none" stroke="#c8c8d8" stroke-width=".5"/><path d="M9 .8v3.400M9 13.800v3.400M.8 9h3.400M13.800 9h3.400" stroke="#c4c8e6" stroke-width="1.200"/><circle cx="9" cy="9" r=".9" fill="#9aa0e0"/></svg>
</main>
<aside aria-label="Side panels">
<div class="b" style="left:1212px;top:49px;width:137px;height:421px;background:#232323;"></div>
<div class="b" style="left:1349px;top:49px;width:13px;height:421px;background:#1e1e1e;"></div>
<div class="b" style="left:1351px;top:51px;width:9px;height:294px;background:#2f2f2f;border-radius:5px;"></div>
<span class="t" style="left:1225px;top:57px;font-size:11px;line-height:12px;color:#b2b2b2;transform:scaleX(0.9968);">Info</span>
<div class="b" style="left:1213px;top:77px;width:135px;height:2px;background:#161616;"></div>
<span class="t" style="left:1225px;top:87px;font-size:11px;line-height:12px;color:#b2b2b2;transform:scaleX(1.0305);">Audio</span>
<div class="b" style="left:1213px;top:107px;width:135px;height:2px;background:#161616;"></div>
<span class="t" style="left:1225px;top:117px;font-size:11px;line-height:12px;color:#b2b2b2;transform:scaleX(0.9789);">Effects &amp; Presets</span>
<div class="b" style="left:1213px;top:137px;width:135px;height:2px;background:#161616;"></div>
<span class="t" style="left:1225.2px;top:147px;font-size:11px;line-height:12px;color:#d2d2d2;transform:scaleX(1.0249);">Preview</span>
<div class="b" style="left:1218px;top:195px;width:130px;height:2px;background:#2c2c2c;"></div>
<span class="t" style="left:1219.2px;top:203px;font-size:11px;line-height:12px;color:#929292;transform:scaleX(0.9886);">Shortcut</span>
<div class="b" style="left:1218px;top:219px;width:134px;height:20px;background:#1c1c1c;border:1px solid #2e2e2e;border-radius:3px;clip-path:inset(0 4px 0 0);"></div>
<span class="t" style="left:1225.9px;top:223px;font-size:11px;line-height:12px;color:#d2d2d2;transform:scaleX(0.9534);">Spacebar</span>
<span class="t" style="left:1219.2px;top:247px;font-size:11px;line-height:12px;color:#b2b2b2;transform:scaleX(0.9629);">Include:</span>
<div class="b" style="left:1313px;top:243px;width:22px;height:20px;background:#181818;border:1px solid #2a2a2a;border-radius:3px;"></div>
<div class="b" style="left:1338px;top:243px;width:14px;height:20px;background:#181818;border:1px solid #2a2a2a;border-radius:3px;clip-path:inset(0 4px 0 0);"></div>
<div class="b" style="left:1218px;top:267px;width:14px;height:14px;border:2px solid #9c9c94;border-radius:3px;"></div>
<span class="t" style="left:1236px;top:268px;font-size:11px;line-height:12px;color:#b2b2b2;transform:scaleX(0.9795);">Cache Before Playback</span>
<span class="t" style="left:1219.2px;top:290px;font-size:11px;line-height:12px;color:#929292;transform:scaleX(0.9438);">Range</span>
<div class="b" style="left:1218px;top:306px;width:134px;height:19px;background:#1c1c1c;border:1px solid #2e2e2e;border-radius:3px;clip-path:inset(0 4px 0 0);"></div>
<span class="t" style="left:1225.9px;top:310px;font-size:11px;line-height:12px;color:#d2d2d2;transform:scaleX(0.9805);">Work Area Extended By C</span>
<span class="t" style="left:1219.2px;top:330px;font-size:11px;line-height:12px;color:#929292;transform:scaleX(1.0055);">Play From</span>
<div class="b" style="left:1218px;top:347px;width:134px;height:19px;background:#1c1c1c;border:1px solid #2e2e2e;border-radius:3px;clip-path:inset(0 4px 0 0);"></div>
<span class="t" style="left:1226px;top:351px;font-size:11px;line-height:12px;color:#d2d2d2;transform:scaleX(1.0192);">Current Time</span>
<span class="t" style="left:1219.4px;top:370px;font-size:11px;line-height:12px;color:#929292;transform:scaleX(0.9832);">Frame Rate</span>
<span class="t" style="left:1288.8px;top:370px;font-size:11px;line-height:12px;color:#929292;transform:scaleX(0.9997);">Skip</span>
<span class="t" style="left:1336.3px;top:370px;font-size:11px;line-height:12px;color:#929292;transform:scaleX(0.9031);">Re</span>
<div class="b" style="left:1218px;top:386px;width:66px;height:19px;background:#181818;border:1px solid #2e2e2e;border-radius:3px;"></div>
<div class="b" style="left:1265px;top:387px;width:18px;height:17px;background:#232323;border-left:1px solid #2e2e2e;border-radius:0 2px 2px 0;"></div>
<span class="t" style="left:1225px;top:390px;font-size:11px;line-height:12px;color:#d2d2d2;transform:scaleX(0.9610);">(29.97)</span>
<div class="b" style="left:1288px;top:386px;width:43px;height:19px;background:#181818;border:1px solid #2e2e2e;border-radius:3px;"></div>
<div class="b" style="left:1312px;top:387px;width:18px;height:17px;background:#232323;border-left:1px solid #2e2e2e;border-radius:0 2px 2px 0;"></div>
<span class="t" style="left:1294.8px;top:390px;font-size:11px;line-height:12px;color:#d2d2d2;transform:scaleX(1.1429);">0</span>
<div class="b" style="left:1335px;top:386px;width:18px;height:19px;background:#181818;border:1px solid #2e2e2e;border-radius:3px;clip-path:inset(0 5px 0 0);"></div>
<span class="t" style="left:1341.5px;top:390px;font-size:11px;line-height:12px;color:#d2d2d2;transform:scaleX(1.0894);">A</span>
<div class="b" style="left:1218px;top:409px;width:14px;height:14px;border:2px solid #9c9c94;border-radius:3px;"></div>
<span class="t" style="left:1236.5px;top:410px;font-size:11px;line-height:12px;color:#b2b2b2;transform:scaleX(0.9579);">Full Screen</span>
<div class="b" style="left:1218px;top:429px;width:130px;height:1px;background:#303030;"></div>
<span class="t" style="left:1219.4px;top:435px;font-size:11px;line-height:12px;color:#929292;transform:scaleX(0.9614);">On (Spacebar) Stop:</span>
<div class="b" style="left:1218px;top:453px;width:14px;height:14px;border:2px solid #9c9c94;border-radius:3px;"></div>
<span class="t" style="left:1236.5px;top:454px;font-size:11px;line-height:12px;color:#b2b2b2;transform:scaleX(0.9669);">If caching, play cached</span>
<svg class="i" style="left:1212px;top:49px" width="136" height="421" viewBox="1212 49 136 421"><path d="M1330 150.5h8.4M1330 153.7h8.4M1330 156.9h8.4" stroke="#d0d0d0" stroke-width="1.200"/><rect x="1258.500" y="175.500" width="1.800" height="9.600" fill="#b0b0aa"/><path d="M1271.300 175.500v9.600l-9.500-4.800z" fill="#b0b0aa"/><path d="M1290.500 175.500v9.600l-9-4.800z" fill="#b0b0aa"/><rect x="1292.300" y="175.500" width="1.900" height="9.600" fill="#b0b0aa"/><path d="M1307.800 175.500v9.600l9.600-4.800z" fill="#b0b0aa"/><rect x="1330.600" y="175.500" width="1.900" height="9.600" fill="#b0b0aa"/><path d="M1334.200 175.500v9.600l9-4.800z" fill="#b0b0aa"/><path d="M1316.700 253c1.800-3 4.600-4.400 7.300-4.400s5.500 1.400 7.300 4.400c-1.800 3-4.600 4.400-7.300 4.400s-5.500-1.400-7.300-4.400z" fill="none" stroke="#2d8ceb" stroke-width="1.500"/><circle cx="1324" cy="253" r="2.700" fill="#2d8ceb"/><circle cx="1325" cy="251.800" r=".9" fill="#181818"/><path d="M1340 250.200h2.800l4.700-4v13.600l-4.700-4h-2.800z" fill="#2d8ceb"/><path d="M1270.6 393.8l3.5 3.6l3.5 -3.6" fill="none" stroke="#b4b4ac" stroke-width="1.100"/><path d="M1317.6 393.8l3.5 3.6l3.5 -3.6" fill="none" stroke="#b4b4ac" stroke-width="1.100"/></svg>
<div class="b" style="left:1348px;top:139px;width:1px;height:331px;background:#232323;"></div>
<div class="b" style="left:1349px;top:49px;width:13px;height:421px;background:#1e1e1e;"></div>
<div class="b" style="left:1351px;top:51px;width:9px;height:294px;background:#2f2f2f;border-radius:5px;"></div>
<div class="b" style="left:1208px;top:49px;width:4px;height:421px;background:#161616;"></div>
</aside>
<section aria-label="Timeline panel">
<div class="b" style="left:0px;top:474px;width:1362px;height:228px;background:#232323;"></div>
<span class="t" style="left:7.5px;top:482px;font-size:11px;line-height:12px;color:#8a8a8a;transform:scaleX(0.9320);">×</span>
<div class="b" style="left:23px;top:482px;width:10px;height:10px;background:#a89484;"></div>
<span class="t" style="left:45.2px;top:482px;font-size:11px;line-height:12px;color:#d2d2d2;transform:scaleX(0.9161);">Comp 1</span>
<span class="t" style="left:8px;top:504px;font-size:15.5px;line-height:17px;color:#2d8ceb;font-weight:700;font-family:'Liberation Serif', serif;transform:scaleX(1.1900);">0;00;00;00</span>
<span class="t" style="left:8px;top:522px;font-size:11px;line-height:12px;color:#2a6fc0;transform:scaleX(0.9207);">00000 (29.97 fps)</span>
<div class="b" style="left:103px;top:509px;width:226px;height:20px;background:#161616;border:1px solid #2e2e2e;border-radius:3px;"></div>
<div class="b" style="left:0px;top:537px;width:531px;height:1px;background:#0c0c0c;"></div>
<div class="b" style="left:0px;top:538px;width:530px;height:18px;background:#323232;"></div>
<div class="b" style="left:0px;top:556px;width:531px;height:1px;background:#0c0c0c;"></div>
<div class="b" style="left:65px;top:542px;width:1px;height:11px;background:#141414;"></div>
<div class="b" style="left:97px;top:542px;width:1px;height:11px;background:#141414;"></div>
<div class="b" style="left:130px;top:542px;width:1px;height:11px;background:#141414;"></div>
<div class="b" style="left:260px;top:542px;width:1px;height:11px;background:#141414;"></div>
<div class="b" style="left:397px;top:542px;width:1px;height:11px;background:#141414;"></div>
<div class="b" style="left:514px;top:542px;width:1px;height:11px;background:#141414;"></div>
<span class="t" style="left:103px;top:542px;font-size:10px;line-height:11px;color:#b2b2b2;transform:scaleX(1.0247);">#</span>
<div class="b" style="left:119px;top:550px;width:1px;height:1px;background:#888;"></div>
<span class="t" style="left:135.8px;top:542px;font-size:10px;line-height:11px;color:#b2b2b2;transform:scaleX(0.8816);">Source Name</span>
<span class="t" style="left:403px;top:542px;font-size:10px;line-height:11px;color:#b2b2b2;transform:scaleX(0.8960);">Parent &amp; Link</span>
<div class="b" style="left:0px;top:557px;width:530px;height:16px;background:#4a4a4a;"></div>
<div class="b" style="left:2px;top:558px;width:13px;height:13px;background:#3a3a3a;"></div>
<div class="b" style="left:32px;top:558px;width:13px;height:13px;background:#3a3a3a;"></div>
<div class="b" style="left:47px;top:558px;width:13px;height:13px;background:#3a3a3a;"></div>
<div class="b" style="left:83px;top:559px;width:12px;height:12px;background:#6272d6;"></div>
<span class="t" style="left:102.5px;top:558px;font-size:11px;line-height:12px;color:#d2d2d2;transform:scaleX(0.9959);">1</span>
<div class="b" style="left:149px;top:557px;width:111px;height:16px;background:#3e3e3e;border:1px dotted #c6c6b8;"></div>
<span class="t" style="left:153.5px;top:559px;font-size:11px;line-height:12px;color:#dcdcdc;transform:scaleX(0.9684);">Shape Layer 1</span>
<div class="b" style="left:265px;top:558px;width:13px;height:13px;background:#3c3c3c;"></div>
<div class="b" style="left:280px;top:558px;width:13px;height:13px;background:#3c3c3c;"></div>
<div class="b" style="left:295px;top:558px;width:13px;height:13px;background:#3c3c3c;"></div>
<div class="b" style="left:340px;top:558px;width:13px;height:13px;background:#3c3c3c;"></div>
<div class="b" style="left:355px;top:558px;width:13px;height:13px;background:#3c3c3c;"></div>
<div class="b" style="left:370px;top:558px;width:13px;height:13px;background:#3c3c3c;"></div>
<div class="b" style="left:421px;top:557px;width:90px;height:16px;background:#232323;"></div>
<span class="t" style="left:428.6px;top:559px;font-size:11px;line-height:12px;color:#d2d2d2;transform:scaleX(0.9393);">None</span>
<div class="b" style="left:0px;top:573px;width:530px;height:1px;background:#1c1c1c;"></div>
<div class="b" style="left:0px;top:590px;width:530px;height:1px;background:#1c1c1c;"></div>
<div class="b" style="left:0px;top:607px;width:530px;height:1px;background:#1c1c1c;"></div>
<div class="b" style="left:0px;top:624px;width:530px;height:1px;background:#1c1c1c;"></div>
<span class="t" style="left:105.4px;top:577px;font-size:11px;line-height:12px;color:#b2b2b2;transform:scaleX(0.9811);">Contents</span>
<span class="t" style="left:353.9px;top:577px;font-size:11px;line-height:12px;color:#b2b2b2;transform:scaleX(0.9540);">Add:</span>
<div class="b" style="left:2px;top:592px;width:13px;height:14px;background:#1a1a1a;"></div>
<div class="b" style="left:118px;top:591px;width:143px;height:16px;background:#454545;background-image:radial-gradient(#5c5c5c 0.5px,transparent 0.6px);background-size:4px 4px;background-color:#454545;"></div>
<span class="t" style="left:122.6px;top:594px;font-size:11px;line-height:12px;color:#d2d2d2;transform:scaleX(0.9384);">Rectangle 1</span>
<div class="b" style="left:266px;top:592px;width:127px;height:14px;background:#1a1a1a;border:1px solid #2c2c2c;border-radius:2px;"></div>
<span class="t" style="left:273.6px;top:593px;font-size:11px;line-height:12px;color:#d2d2d2;transform:scaleX(1.0239);">Normal</span>
<span class="t" style="left:105.4px;top:611px;font-size:11px;line-height:12px;color:#b2b2b2;transform:scaleX(0.9876);">Transform</span>
<span class="t" style="left:266.6px;top:610px;font-size:11px;line-height:12px;color:#2d8ceb;transform:scaleX(0.9183);">Reset</span>
<div class="b" style="left:0px;top:686px;width:638px;height:1px;background:#0c0c0c;"></div>
<div class="b" style="left:1px;top:687px;width:18px;height:15px;background:#1a1a1a;border:1px solid #2c2c2c;"></div>
<div class="b" style="left:263px;top:688px;width:134px;height:16px;background:#1e1e1e;border:1px solid #363636;border-radius:3px;"></div>
<span class="t" style="left:268.4px;top:689px;font-size:11px;line-height:12px;color:#b2b2b2;transform:scaleX(1.0052);">Toggle Switches / Modes</span>
<svg class="i" style="left:0;top:474px" width="1362" height="228" viewBox="0 474 1362 228"><path d="M90 485.4h8.2M90 488.59999999999997h8.2M90 491.79999999999995h8.2" stroke="#d0d0d0" stroke-width="1.200"/><circle cx="116.5" cy="517.8" r="3.9" fill="none" stroke="#b6b6ae" stroke-width="1.200"/><path d="M113.77 520.53l-4.200 4.200" stroke="#b6b6ae" stroke-width="1.400"/><path d="M122 521h4.800l-2.400 2.700z" fill="#b6b6ae"/><rect x="344" y="513.500" width="5" height="2.600" fill="#b6b6ae"/><rect x="353.500" y="513.500" width="5.500" height="2.600" fill="#b6b6ae"/><rect x="353.500" y="519.500" width="5.500" height="2.600" fill="#b6b6ae"/><path d="M349 514.800h4.500M351.200 514.800v6h2.300" fill="none" stroke="#b6b6ae" stroke-width="1.100"/><path d="M355.500 524h5l-2.500 2.800z" fill="#b6b6ae"/><path d="M383.500 518.200l5.500-2.200l5.500 2.200v6l-5.500 2.500l-5.500-2.500zM383.500 518.200l5.500 2.300l5.500-2.300M389 520.500v6.200" fill="none" stroke="#b6b6ae" stroke-width="1.200"/><path d="M381.500 510.300v9M377 514.800h9M378.300 511.600l6.400 6.400M384.700 511.600l-6.400 6.400" stroke="#b6b6ae" stroke-width="1"/><circle cx="381.500" cy="514.800" r="2.200" fill="#b6b6ae"/><path d="M414 518.500a6 5.500 0 0 1 12 0z" fill="#b6b6ae"/><rect x="412" y="519.500" width="16.300" height="5.500" fill="#6e6e6a"/><circle cx="417.800" cy="516.600" r="1" fill="#232323"/><circle cx="422.400" cy="516.600" r="1" fill="#232323"/><path d="M420.100 515v8M417.500 521.500l2.600 1.700l2.600-1.700" stroke="#d8d8d0" stroke-width="1.300" fill="none"/><rect x="441.3" y="512.3" width="11.500" height="11" fill="#b6b6ae"/><rect x="442.3" y="513.3" width="1.400" height="1.500" fill="#333"/><rect x="450.40000000000003" y="513.3" width="1.400" height="1.500" fill="#333"/><rect x="442.3" y="515.9" width="1.400" height="1.500" fill="#333"/><rect x="450.40000000000003" y="515.9" width="1.400" height="1.500" fill="#333"/><rect x="442.3" y="518.5" width="1.400" height="1.500" fill="#333"/><rect x="450.40000000000003" y="518.5" width="1.400" height="1.500" fill="#333"/><rect x="442.3" y="521.1" width="1.400" height="1.500" fill="#333"/><rect x="450.40000000000003" y="521.1" width="1.400" height="1.500" fill="#333"/><rect x="444.8" y="513.5" width="4.600" height="3.600" fill="#333"/><rect x="444.8" y="518.5" width="4.600" height="3.600" fill="#333"/><path d="M438.90000000000003 515.3v10.500h10.500" fill="none" stroke="#b6b6ae" stroke-width="1.200"/><g transform="translate(464.5 512) scale(1.0)"><circle cx="5" cy="9.500" r="4.400" fill="none" stroke="#b6b6ae" stroke-width="1.100"/><circle cx="7" cy="7.500" r="4.400" fill="#232323" stroke="#b6b6ae" stroke-width="1.100"/><circle cx="9.500" cy="5.200" r="4.800" fill="#6c6c68" stroke="#b6b6ae" stroke-width="1.100"/></g><rect x="499" y="513.500" width="15" height="12" fill="none" stroke="#b6b6ae" stroke-width="1.200"/><path d="M500 515.500c6 0 7 8.500 13 8.500" fill="none" stroke="#b6b6ae" stroke-width="1.200"/><path d="M502.500 511.500v2M506.500 511.500v2M510.500 511.500v2" stroke="#b6b6ae" stroke-width="1.100"/><path d="M3.5999999999999996 547.3c1.500-2.300 3.300-3.300 5.400-3.300s3.900 1 5.400 3.300c-1.500 2.300-3.300 3.300-5.400 3.300s-3.900-1-5.400-3.300z" fill="#b6b6ae"/><circle cx="9" cy="547.3" r="2.200" fill="#323232"/><circle cx="9" cy="547.3" r="1" fill="#b6b6ae"/><path d="M18 545.300h2.500l3.800-3.300v10.500l-3.800-3.300h-2.500z" fill="#b6b6ae"/><path d="M26 544.500a3.500 3.500 0 0 1 0 5.500M27.600 542.500a6 6 0 0 1 0 9.500" fill="none" stroke="#b6b6ae" stroke-width="1.100"/><circle cx="38.600" cy="547.700" r="3.600" fill="#b6b6ae"/><path d="M50.800 546.500v-1.800a2.800 2.800 0 0 1 5.600 0v1.800" fill="none" stroke="#b6b6ae" stroke-width="1.300"/><rect x="49" y="546.300" width="9.300" height="5.700" rx=".6" fill="#b6b6ae"/><rect x="53" y="548" width="1.300" height="2.400" fill="#323232"/><path transform="translate(79.3 541.2) scale(1.0)" d="M0.500 1.200L4.800 0l7.200 7.200l-4.800 4.800l-7.200-7.200zM2.600 2.200a1 1 0 1 0 .01 0z" fill="#b6b6ae" fill-rule="evenodd"/><path d="M267.5 549.2a4.200 5.800 0 0 1 8.400 0" fill="none" stroke="#b6b6ae" stroke-width="1.100"/><path d="M265.4 549.5h12.600M271.7 545.4v7" stroke="#b6b6ae" stroke-width="1.100" fill="none"/><circle cx="269.8" cy="546.4" r=".7" fill="#b6b6ae"/><circle cx="273.59999999999997" cy="546.4" r=".7" fill="#b6b6ae"/><circle cx="286.6" cy="547.5" r="2.1" fill="none" stroke="#b6b6ae" stroke-width=".9"/><path d="M289.70 547.50L291.80 547.50M288.79 549.69L290.28 551.18M286.60 550.60L286.60 552.70M284.41 549.69L282.92 551.18M283.50 547.50L281.40 547.50M284.41 545.31L282.92 543.82M286.60 544.40L286.60 542.30M288.79 545.31L290.28 543.82" stroke="#b6b6ae" stroke-width=".9"/><path d="M296.500 542.500l9.500 9.500" stroke="#b6b6ae" stroke-width="1.800" stroke-dasharray="1.800 1.100"/><text x="311.500" y="551" font-family="Liberation Sans, sans-serif" font-style="italic" font-size="13" textLength="10" lengthAdjust="spacingAndGlyphs" fill="#b6b6ae">fx</text><rect x="326.500" y="541.500" width="10" height="9" fill="#b6b6ae"/><rect x="328.700" y="542.700" width="5.600" height="2.800" fill="#323232"/><rect x="328.700" y="546.600" width="5.600" height="2.800" fill="#323232"/><path d="M325 543.500v8.800h9.500" fill="none" stroke="#b6b6ae" stroke-width="1.100"/><g transform="translate(340.3 541.3) scale(0.92)"><circle cx="5" cy="9.500" r="4.400" fill="none" stroke="#b6b6ae" stroke-width="1.100"/><circle cx="7" cy="7.500" r="4.400" fill="#323232" stroke="#b6b6ae" stroke-width="1.100"/><circle cx="9.500" cy="5.200" r="4.800" fill="#6c6c68" stroke="#b6b6ae" stroke-width="1.100"/></g><circle cx="361.500" cy="547.500" r="5" fill="none" stroke="#b6b6ae" stroke-width="1.200"/><path d="M358 551a5 5 0 0 0 7-7z" fill="#b6b6ae"/><path d="M370.8 544.8l6-2.600l6 2.600v6.500l-6 2.800l-6-2.800zM370.8 544.8l6 2.700l6-2.700M376.8 547.5v6.500" fill="none" stroke="#b6b6ae" stroke-width="1.100"/><path d="M3.299999999999999 564.8c1.500-2.300 3.300-3.300 5.400-3.300s3.900 1 5.400 3.300c-1.500 2.300-3.300 3.300-5.400 3.300s-3.900-1-5.400-3.300z" fill="#d8d8d8"/><circle cx="8.7" cy="564.8" r="2.200" fill="#3a3a3a"/><circle cx="8.7" cy="564.8" r="1" fill="#d8d8d8"/><path d="M71.200 561.500h6.600l-3.300 7.600z" fill="#c8c8c8"/><path d="M139.600 559l1.750 4.050l4.400.4l-3.350 2.900l1.050 4.300l-3.850-2.350l-3.850 2.350l1.050-4.300l-3.350-2.900l4.400-.4z" fill="#b8b8b0"/><path d="M267.5 566.2a4.200 5.800 0 0 1 8.400 0" fill="none" stroke="#d0d0c8" stroke-width="1.100"/><path d="M265.4 566.5h12.600M271.7 562.4v7" stroke="#d0d0c8" stroke-width="1.100" fill="none"/><circle cx="269.8" cy="563.4" r=".7" fill="#d0d0c8"/><circle cx="273.59999999999997" cy="563.4" r=".7" fill="#d0d0c8"/><circle cx="286.5" cy="564.6" r="2.1" fill="none" stroke="#8e8e88" stroke-width=".9"/><path d="M289.60 564.60L291.70 564.60M288.69 566.79L290.18 568.28M286.50 567.70L286.50 569.80M284.31 566.79L282.82 568.28M283.40 564.60L281.30 564.60M284.31 562.41L282.82 560.92M286.50 561.50L286.50 559.40M288.69 562.41L290.18 560.92" stroke="#8e8e88" stroke-width=".9"/><path d="M297 570l9.500-10.500" stroke="#c8c8c0" stroke-width="1.300"/><path d="M408.600 569.200c-3.200 0-5.400-2.300-5.400-5.100s2.300-5 5.200-5c2.700 0 4.600 1.900 4.600 4.300c0 2.200-1.700 3.700-3.700 3.700c-1.700 0-2.900-1.200-2.900-2.700c0-1.300 1-2.200 2.200-2.200c1 0 1.700.7 1.700 1.500" fill="none" stroke="#b6b6ae" stroke-width="1.100"/><path d="M497.6 562.6l3.7 3.8l3.7 -3.8" fill="none" stroke="#b4b4ac" stroke-width="1.100"/><path d="M88 579.300h6.800l-3.400 6.700z" fill="#c0c0c0"/><circle cx="386.600" cy="581.800" r="5.200" fill="#b6b6ae"/><path d="M384.800 578.800v6l4.600-3z" fill="#232323"/><path d="M3.5999999999999996 599c1.500-2.300 3.300-3.300 5.400-3.300s3.900 1 5.400 3.300c-1.500 2.300-3.300 3.300-5.400 3.300s-3.900-1-5.400-3.300z" fill="#d8d8d8"/><circle cx="9" cy="599" r="2.200" fill="#1a1a1a"/><circle cx="9" cy="599" r="1" fill="#d8d8d8"/><path d="M104.500 595.800v6.800l7.600-3.400z" fill="#c0c0c0"/><path d="M380 597.3l3.7 3.8l3.7 -3.8" fill="none" stroke="#b4b4ac" stroke-width="1.100"/><path d="M87.600 612.800v6.800l7.600-3.400z" fill="#c0c0c0"/><rect x="4.500" y="690" width="6.500" height="6.500" fill="#1a1a1a" stroke="#2d8ceb" stroke-width="1.200"/><rect x="8.300" y="693.700" width="6.500" height="6.500" fill="#1a1a1a" stroke="#2d8ceb" stroke-width="1.200"/><rect x="10.800" y="696.200" width="1.600" height="1.600" fill="#2d8ceb"/><circle cx="26.300" cy="693.500" r="4" fill="none" stroke="#b6b6ae" stroke-width="1.100"/><rect x="27" y="694" width="6" height="6" fill="#232323" stroke="#b6b6ae" stroke-width="1.100"/><path d="M45 691.800c-2.200 0-1.600 2-1.800 3c-.2.900-1.400 1.200-3 1.200c1.600 0 2.800.3 3 1.200c.2 1-.4 3 1.800 3h1.800c2.200 0 1.600-2 1.800-3c.2-.9 1.400-1.200 3-1.200c-1.600 0-2.800-.3-3-1.200c-.2-1 .4-3-1.800-3z" fill="#6a6a66" stroke="#b6b6ae" stroke-width=".9"/><path d="M536.300 696l3.400-2.200l1.800 1.200l2-2.800l2.600 3.800z" fill="#b6b6ae"/><path d="M567 694.800h38.500" stroke="#3c3c3c" stroke-width="1.400"/><circle cx="562.200" cy="695.800" r="4.300" fill="#2a2a2a" stroke="#b6b6ae" stroke-width="1.500"/><path d="M616.800 697.600l4.200-5.200l1.600 2l-2.800 3.200zM621.500 697.600l5.600-6.600l6.200 6.600z" fill="#b6b6ae"/><path d="M1347 539.500h11v8l-5.500 5.500l-5.500-5.500z" fill="#b6b6ae"/><rect x="1351.500" y="561.500" width="6.500" height="7" fill="#b6b6ae"/><path d="M1351.500 560.500l-6.500 6.500h7" fill="none" stroke="#b6b6ae" stroke-width="1.100"/><circle cx="1350.300" cy="569" r="2.700" fill="#232323" stroke="#b6b6ae" stroke-width="1.100"/></svg>
<div class="b" style="left:530px;top:507px;width:1px;height:30px;background:#1a1a1a;"></div>
<div class="b" style="left:530px;top:537px;width:1px;height:149px;background:#0c0c0c;"></div>
<div class="b" style="left:531px;top:506px;width:812px;height:12px;background:#141414;"></div>
<div class="b" style="left:539px;top:508px;width:797px;height:8px;background:#6c6c6c;background-image:radial-gradient(#8a8a8a 0.5px,transparent 0.6px);background-size:3px 3px;background-color:#6a6a6a;"></div>
<div class="b" style="left:531px;top:508px;width:6px;height:8px;background:#2d8ceb;border-radius:6px 0 0 6px;"></div>
<div class="b" style="left:1337px;top:508px;width:6px;height:8px;background:#2d8ceb;border-radius:0 6px 6px 0;"></div>
<span class="t" style="left:534.2px;top:519px;font-size:9.5px;line-height:11px;color:#b2b2b2;transform:scaleX(1.0017);">:00s</span>
<div class="b" style="left:592px;top:531px;width:1px;height:5px;background:#9a9a9a;"></div>
<span class="t" style="left:582.19px;top:519px;font-size:9.5px;line-height:11px;color:#b2b2b2;transform:scaleX(0.9982);">02s</span>
<div class="b" style="left:645px;top:531px;width:1px;height:5px;background:#9a9a9a;"></div>
<span class="t" style="left:635.38px;top:519px;font-size:9.5px;line-height:11px;color:#b2b2b2;transform:scaleX(0.9982);">04s</span>
<div class="b" style="left:698px;top:531px;width:1px;height:5px;background:#9a9a9a;"></div>
<span class="t" style="left:688.5699999999999px;top:519px;font-size:9.5px;line-height:11px;color:#b2b2b2;transform:scaleX(0.9982);">06s</span>
<div class="b" style="left:751px;top:531px;width:1px;height:5px;background:#9a9a9a;"></div>
<span class="t" style="left:741.76px;top:519px;font-size:9.5px;line-height:11px;color:#b2b2b2;transform:scaleX(0.9982);">08s</span>
<div class="b" style="left:804px;top:531px;width:1px;height:5px;background:#9a9a9a;"></div>
<span class="t" style="left:794.95px;top:519px;font-size:9.5px;line-height:11px;color:#b2b2b2;transform:scaleX(0.9982);">10s</span>
<div class="b" style="left:858px;top:531px;width:1px;height:5px;background:#9a9a9a;"></div>
<span class="t" style="left:848.14px;top:519px;font-size:9.5px;line-height:11px;color:#b2b2b2;transform:scaleX(0.9982);">12s</span>
<div class="b" style="left:911px;top:531px;width:1px;height:5px;background:#9a9a9a;"></div>
<span class="t" style="left:901.3299999999999px;top:519px;font-size:9.5px;line-height:11px;color:#b2b2b2;transform:scaleX(0.9982);">14s</span>
<div class="b" style="left:964px;top:531px;width:1px;height:5px;background:#9a9a9a;"></div>
<span class="t" style="left:954.52px;top:519px;font-size:9.5px;line-height:11px;color:#b2b2b2;transform:scaleX(0.9982);">16s</span>
<div class="b" style="left:1017px;top:531px;width:1px;height:5px;background:#9a9a9a;"></div>
<span class="t" style="left:1007.71px;top:519px;font-size:9.5px;line-height:11px;color:#b2b2b2;transform:scaleX(0.9982);">18s</span>
<div class="b" style="left:1070px;top:531px;width:1px;height:5px;background:#9a9a9a;"></div>
<span class="t" style="left:1060.9px;top:519px;font-size:9.5px;line-height:11px;color:#b2b2b2;transform:scaleX(0.9982);">20s</span>
<div class="b" style="left:1124px;top:531px;width:1px;height:5px;background:#9a9a9a;"></div>
<span class="t" style="left:1114.09px;top:519px;font-size:9.5px;line-height:11px;color:#b2b2b2;transform:scaleX(0.9982);">22s</span>
<div class="b" style="left:1177px;top:531px;width:1px;height:5px;background:#9a9a9a;"></div>
<span class="t" style="left:1167.28px;top:519px;font-size:9.5px;line-height:11px;color:#b2b2b2;transform:scaleX(0.9982);">24s</span>
<div class="b" style="left:1230px;top:531px;width:1px;height:5px;background:#9a9a9a;"></div>
<span class="t" style="left:1220.47px;top:519px;font-size:9.5px;line-height:11px;color:#b2b2b2;transform:scaleX(0.9982);">26s</span>
<div class="b" style="left:1283px;top:531px;width:1px;height:5px;background:#9a9a9a;"></div>
<span class="t" style="left:1273.6599999999999px;top:519px;font-size:9.5px;line-height:11px;color:#b2b2b2;transform:scaleX(0.9982);">28s</span>
<div class="b" style="left:1336px;top:531px;width:1px;height:5px;background:#9a9a9a;"></div>
<span class="t" style="left:1326.85px;top:519px;font-size:9.5px;line-height:11px;color:#b2b2b2;transform:scaleX(0.9982);">30s</span>
<div class="b" style="left:531px;top:536px;width:813px;height:1px;background:#0c0c0c;"></div>
<div class="b" style="left:539px;top:537px;width:797px;height:15px;background:#646464;"></div>
<div class="b" style="left:531px;top:537px;width:6px;height:15px;background:#2d8ceb;border-radius:6px 0 0 6px;"></div>
<div class="b" style="left:1337px;top:537px;width:5px;height:15px;background:#2d8ceb;border-radius:0 4px 4px 0;"></div>
<div class="b" style="left:531px;top:552px;width:813px;height:1px;background:#111;"></div>
<div class="b" style="left:539px;top:553px;width:797px;height:3px;background:#1fc41f;"></div>
<div class="b" style="left:531px;top:556px;width:813px;height:1px;background:#1a1a1a;"></div>
<div class="b" style="left:1343px;top:556px;width:19px;height:1px;background:#0c0c0c;"></div>
<div class="b" style="left:531px;top:557px;width:812px;height:16px;background:#4a4a4a;"></div>
<div class="b" style="left:539px;top:557px;width:797px;height:16px;background:#6272d0;background:linear-gradient(to bottom,#8a98e0 0,#6878d6 1px,#6676d4 8px,#5c6cc8 9px,#5a6ac6 15px,#4c58a8 16px);"></div>
<div class="b" style="left:531px;top:573px;width:8px;height:112px;background:#262626;"></div>
<div class="b" style="left:539px;top:573px;width:797px;height:112px;background:#323232;"></div>
<div class="b" style="left:1336px;top:573px;width:7px;height:51px;background:#3a3a3a;"></div>
<div class="b" style="left:531px;top:573px;width:812px;height:1px;background:#262626;"></div>
<div class="b" style="left:531px;top:590px;width:812px;height:1px;background:#262626;"></div>
<div class="b" style="left:531px;top:607px;width:812px;height:1px;background:#262626;"></div>
<div class="b" style="left:531px;top:624px;width:812px;height:1px;background:#262626;"></div>
<svg class="i" style="left:535px;top:577px;" width="7" height="11" viewBox="0 0 7 11"><path d="M0 0.500h2M4 0.500h2.500M0 10.500h2M4 10.500h2.500M2 1h2v9h-2z" stroke="#d0d0d0" stroke-width="1" fill="none"/><rect x="2.500" y="1" width="1" height="9" fill="#d0d0d0"/></svg>
<svg class="i" style="left:535px;top:594px;" width="7" height="11" viewBox="0 0 7 11"><path d="M0 0.500h2M4 0.500h2.500M0 10.500h2M4 10.500h2.500M2 1h2v9h-2z" stroke="#d0d0d0" stroke-width="1" fill="none"/><rect x="2.500" y="1" width="1" height="9" fill="#d0d0d0"/></svg>
<svg class="i" style="left:535px;top:611px;" width="7" height="11" viewBox="0 0 7 11"><path d="M0 0.500h2M4 0.500h2.500M0 10.500h2M4 10.500h2.500M2 1h2v9h-2z" stroke="#d0d0d0" stroke-width="1" fill="none"/><rect x="2.500" y="1" width="1" height="9" fill="#d0d0d0"/></svg>
<div class="b" style="left:538px;top:508px;width:1px;height:178px;background:#2d8ceb;"></div>
<svg class="i" style="left:532px;top:522px;" width="14" height="14" viewBox="0 0 14 14"><path d="M0.700 0h12.600v6l-6.300 8l-6.300-8z" fill="#2d8ceb"/><path d="M7 6.500v7.500" stroke="#c4b49c" stroke-width=".8"/></svg>
<span class="t" style="left:1051.6px;top:628px;font-size:20px;line-height:22px;color:rgba(190,190,190,0.62);transform:scaleX(0.9909);">Activate Windows</span>
<span class="t" style="left:1051.6px;top:654px;font-size:14.5px;line-height:16px;color:rgba(190,190,190,0.62);transform:scaleX(1.0138);">Go to PC settings to activate Windows.</span>
</section>
</body></html>
